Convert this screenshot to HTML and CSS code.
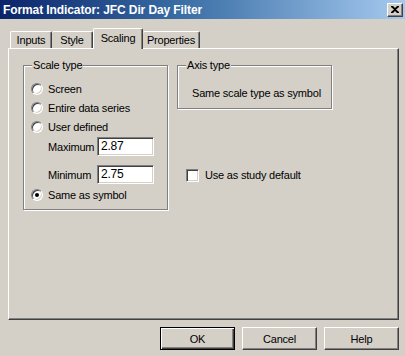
FILE: index.html
```html
<!doctype html>
<html>
<head>
  <meta charset="UTF-8" />
  <title>Format Indicator: JFC Dir Day Filter</title>
  <link rel="stylesheet" href="styles.css">
</head>
<body>
  <div class="titlebar">
    <span class="title">Format Indicator: JFC Dir Day Filter</span>
    <span class="close">
      <svg width="8" height="7" viewBox="0 0 8 7"><path d="M0 0h2l2 2 2-2h2v1L5 3.5 8 6v1H6L4 5 2 7H0V6l3-2.5L0 1z" fill="#000"/></svg>
    </span>
  </div>

  <div class="tabs">
    <div class="tab t-inputs">Inputs</div>
    <div class="tab t-style">Style</div>
    <div class="tab t-scaling selected">Scaling</div>
    <div class="tab t-props">Properties</div>
  </div>

  <div class="panel">
    <div class="group scale">
      <span class="group-title">Scale type</span>
      <div class="row r1"><span class="radio"></span>Screen</div>
      <div class="row r2"><span class="radio"></span>Entire data series</div>
      <div class="row r3"><span class="radio"></span>User defined</div>
      <div class="field f1"><span class="field-label">Maximum</span><span class="input">2.87</span></div>
      <div class="field f2"><span class="field-label">Minimum</span><span class="input">2.75</span></div>
      <div class="row r4"><span class="radio checked"></span>Same as symbol</div>
    </div>
    <div class="side">
      <div class="group axis">
        <span class="group-title">Axis type</span>
        <div class="axis-text">Same scale type as symbol</div>
      </div>
      <div class="check-row"><span class="checkbox"></span>Use as study default</div>
    </div>
  </div>

  <div class="buttons">
    <div class="btn default"><span>OK</span></div>
    <div class="btn"><span>Cancel</span></div>
    <div class="btn"><span>Help</span></div>
  </div>
</body>
</html>
```

FILE: styles.css
```css
html, body {
  margin: 0;
  padding: 0;
  background: #d4d0c8;
  font-family: "Liberation Sans", Arial, sans-serif;
  font-size: 11px;
  letter-spacing: -0.2px;
  color: #000;
}
.titlebar {
  height: 19px;
  background: linear-gradient(to right, #0a246a 0%, #3a6ea5 45%, #a6caf0 100%);
  display: flex;
  align-items: center;
  justify-content: space-between;
  padding: 0 2px 0 3px;
}
.title {
  color: #fff;
  font-weight: bold;
  font-size: 12px;
  letter-spacing: -0.1px;
}
.close {
  width: 14px;
  height: 12px;
  background: #d4d0c8;
  border: 1px solid;
  border-color: #fff #404040 #404040 #fff;
  box-shadow: inset -1px -1px 0 #808080;
  display: flex;
  align-items: center;
  justify-content: center;
}
.tabs {
  display: flex;
  align-items: flex-end;
  height: 21px;
  margin: 8px 0 0 10px;
}
.tab {
  height: 17px;
  box-sizing: border-box;
  border-top: 1px solid #fff;
  border-left: 1px solid #fff;
  border-right: 1px solid #404040;
  box-shadow: inset -1px 0 0 #808080;
  border-top-left-radius: 2px;
  border-top-right-radius: 2px;
  text-align: center;
  line-height: 17px;
}
.t-inputs { width: 42px; }
.t-style { width: 41px; border-left: none; }
.t-scaling { width: 50px; }
.t-props { width: 57px; border-left: none; }
.tab.selected {
  height: 21px;
  line-height: 18px;
  margin-bottom: -1px;
  background: #d4d0c8;
  position: relative;
  z-index: 1;
}
.panel {
  margin-left: 8px;
  width: 391px;
  height: 272px;
  box-sizing: border-box;
  border-top: 1px solid #fff;
  border-left: 1px solid #fff;
  border-right: 1px solid #404040;
  border-bottom: 1px solid #404040;
  box-shadow: inset -1px -1px 0 #808080;
  display: flex;
  align-items: flex-start;
  padding: 16px 0 0 14px;
  gap: 9px;
}
.group {
  position: relative;
  box-sizing: border-box;
  border: 1px solid #808080;
  box-shadow: 1px 1px 0 #fff, inset 1px 1px 0 #fff;
}
.group-title {
  position: absolute;
  top: -8px;
  left: 8px;
  padding: 0 1px;
  background: #d4d0c8;
  line-height: 14px;
}
.scale {
  width: 145px;
  height: 145px;
  padding: 14px 0 0 7px;
}
.row {
  display: flex;
  align-items: center;
  height: 18px;
}
.r2, .r3 { margin-top: 1px; }
.radio {
  width: 10px;
  height: 10px;
  border-radius: 50%;
  background: #fff;
  border: 1px solid;
  border-color: #808080 #fff #fff #808080;
  box-shadow: inset 1px 1px 0 #404040, inset -1px -1px 0 #d4d0c8;
  margin-right: 5px;
  display: flex;
  align-items: center;
  justify-content: center;
}
.radio.checked::after {
  content: "";
  width: 4px;
  height: 4px;
  border-radius: 50%;
  background: #000;
}
.field {
  display: flex;
  align-items: center;
  height: 19px;
  padding-left: 17px;
}
.f1 { margin-top: 1px; }
.f2 { margin-top: 9px; }
.field-label {
  width: 49px;
}
.input {
  width: 57px;
  height: 19px;
  box-sizing: border-box;
  background: #fff;
  border: 1px solid;
  border-color: #808080 #fff #fff #808080;
  box-shadow: inset 1px 1px 0 #404040, inset -1px -1px 0 #d4d0c8;
  padding: 0 0 0 3px;
  line-height: 17px;
  font-size: 12px;
}
.r4 { margin-top: 2px; }
.side {
  display: flex;
  flex-direction: column;
}
.axis {
  width: 155px;
  height: 44px;
  padding: 20px 0 0 14px;
}
.axis-text {
  line-height: 14px;
}
.check-row {
  display: flex;
  align-items: center;
  margin: 59px 0 0 9px;
  height: 14px;
}
.checkbox {
  width: 13px;
  height: 13px;
  box-sizing: border-box;
  background: #fff;
  border: 1px solid;
  border-color: #808080 #fff #fff #808080;
  box-shadow: inset 1px 1px 0 #404040, inset -1px -1px 0 #d4d0c8;
  margin-right: 6px;
}
.buttons {
  display: flex;
  justify-content: flex-end;
  gap: 7px;
  margin: 7px 6px 0 0;
}
.btn {
  width: 75px;
  height: 23px;
  box-sizing: border-box;
  border: 1px solid;
  border-color: #fff #404040 #404040 #fff;
  box-shadow: inset -1px -1px 0 #808080;
  display: flex;
  align-items: center;
  justify-content: center;
}
.btn.default {
  border-color: #000;
  box-shadow: inset 1px 1px 0 #fff, inset -1px -1px 0 #404040, inset -2px -2px 0 #808080;
}
```
